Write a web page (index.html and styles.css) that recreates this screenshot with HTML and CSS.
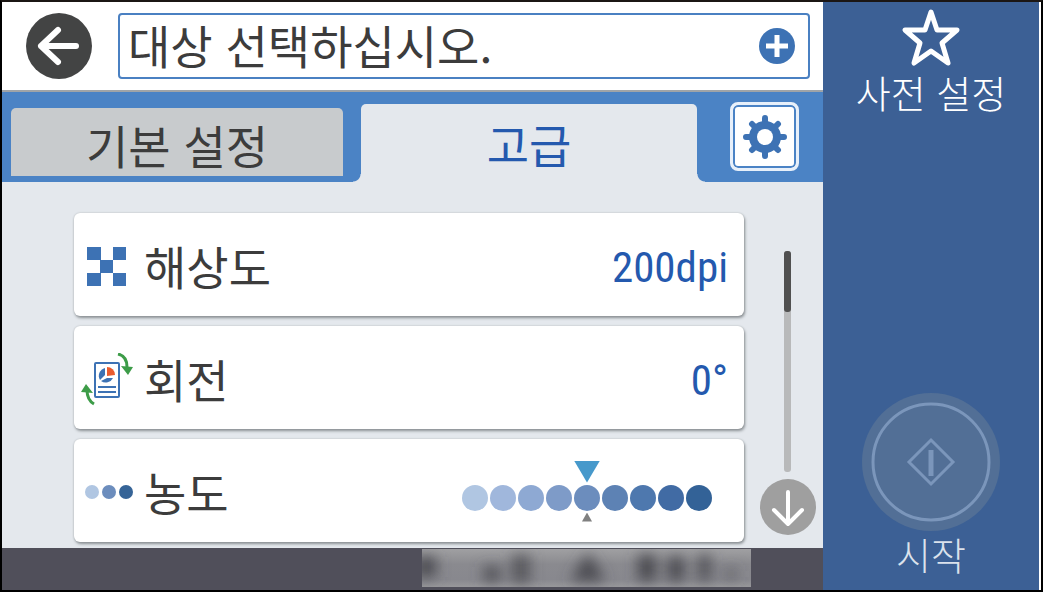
FILE: index.html
```html
<!DOCTYPE html>
<html lang="ko">

<head>
  <meta charset="UTF-8">
  <meta name="viewport" content="width=device-width, initial-scale=1.0">
  <title>스캔 설정</title>
  <link rel="stylesheet" href="styles.css">
</head>

<body>
  <div class="panel">
    <main>
      <header>
        <button class="back" type="button" aria-label="뒤로">
          <svg viewBox="0 0 66 66" width="66" height="66">
            <circle cx="33" cy="33" r="33" fill="#434444" />
            <path d="M43 33H15M32 17L15 33L32 49" fill="none" stroke="#fff" stroke-width="6" stroke-linecap="round" stroke-linejoin="round" />
            <path d="M40 33H50" stroke="#fff" stroke-width="6" stroke-linecap="round" />
          </svg>
        </button>
        <div class="destination">
          <input type="text" value="대상 선택하십시오." aria-label="대상" readonly>
          <button type="button" aria-label="대상 추가">
            <svg viewBox="0 0 36 36" width="36" height="36">
              <circle cx="18" cy="18" r="18" fill="#3d72b4" />
              <path d="M18 7V29M7 18H29" stroke="#fff" stroke-width="5" />
            </svg>
          </button>
        </div>
      </header>

      <nav class="tabs">
        <button class="tab" type="button">기본 설정</button>
        <button class="tab active" type="button">고급</button>
        <button class="gear" type="button" aria-label="설정">
          <svg viewBox="0 0 46 46" width="46" height="46">
            <g stroke="#3d72b4" stroke-width="6" stroke-linecap="round">
              <path d="M23 4V42M4 23H42M10 10L36 36M36 10L10 36" />
            </g>
            <circle cx="23" cy="23" r="16" fill="#3d72b4" />
            <circle cx="23" cy="23" r="8" fill="#fff" />
          </svg>
        </button>
      </nav>

      <section class="content">
        <div class="list">
          <button class="card" type="button">
            <svg class="icon" viewBox="0 0 54 54" width="54" height="54">
              <path d="M7 7h14v13h-14zM33 7h13v13h-13zM20 20h13v13h-13zM7 33h14v13h-14zM33 33h13v13h-13z" fill="#3d72b4" />
            </svg>
            <span class="name">해상도</span>
            <span class="value">200dpi</span>
          </button>

          <button class="card" type="button">
            <svg class="icon" viewBox="0 0 54 54" width="54" height="54">
              <rect x="15" y="10" width="24" height="34" rx="1" fill="#fff" stroke="#3d72b4" stroke-width="2" />
              <path d="M25 15A8 8 0 0 0 20 27L25 22Z" fill="#3d72b4" />
              <path d="M21 28A8 8 0 0 0 33 25H27Z" fill="#3d72b4" />
              <path d="M27 14A8 8 0 0 1 35 22L27 23Z" fill="#ea5b2d" />
              <path d="M18 34H36M18 39H36" stroke="#3d72b4" stroke-width="2" />
              <g fill="none" stroke="#3d9c48" stroke-width="3">
                <path d="M38 1Q47 3 47 14" />
                <path d="M14 51Q7 47 7 37" />
              </g>
              <path d="M41 13L53 14L48 22ZM1 39L6 31L13 40Z" fill="#3d9c48" />
            </svg>
            <span class="name">회전</span>
            <span class="value">0°</span>
          </button>

          <div class="card" role="group" aria-labelledby="density-name">
            <svg class="icon" viewBox="0 0 54 54" width="54" height="54">
              <circle cx="12" cy="26" r="7" fill="#b0c6e2" />
              <circle cx="29" cy="26" r="7" fill="#6c8dbd" />
              <circle cx="46" cy="26" r="7" fill="#366497" />
            </svg>
            <span class="name" id="density-name">농도</span>
            <div class="density">
              <input type="radio" name="density" aria-label="1" style="background: #b0c6e2">
              <input type="radio" name="density" aria-label="2" style="background: #a0b7dc">
              <input type="radio" name="density" aria-label="3" style="background: #8ea9d3">
              <input type="radio" name="density" aria-label="4" style="background: #7e9bc8">
              <input type="radio" name="density" aria-label="5" style="background: #6c8dbd" checked>
              <input type="radio" name="density" aria-label="6" style="background: #5d82b4">
              <input type="radio" name="density" aria-label="7" style="background: #4e78ae">
              <input type="radio" name="density" aria-label="8" style="background: #416ba4">
              <input type="radio" name="density" aria-label="9" style="background: #336297">
            </div>
          </div>
        </div>

        <div class="scroll">
          <div class="track">
            <div class="thumb"></div>
          </div>
          <button type="button" aria-label="아래로">
            <svg viewBox="0 0 57 57" width="57" height="57">
              <circle cx="29" cy="29" r="28" fill="#9f9f9f" />
              <path d="M29 14V46M15 32L29 46L43 32" fill="none" stroke="#fff" stroke-width="4" stroke-linecap="round" stroke-linejoin="round" />
            </svg>
          </button>
        </div>
      </section>

      <footer>
        <svg class="status" viewBox="0 0 329 38" width="329" height="38">
          <defs>
            <filter id="soft" x="-20%" y="-50%" width="140%" height="200%">
              <feGaussianBlur stdDeviation="7" />
            </filter>
            <linearGradient id="shade" x2="0" y2="1">
              <stop offset="0" stop-color="#a0a0a2" />
              <stop offset="0.4" stop-color="#8a8a8f" />
              <stop offset="0.8" stop-color="#88888e" />
              <stop offset="1" stop-color="#98989b" />
            </linearGradient>
          </defs>
          <rect width="329" height="38" fill="url(#shade)" />
          <g filter="url(#soft)" fill="#4a4a50">
            <rect x="-6" y="8" width="20" height="20" />
            <rect x="62" y="18" width="16" height="14" />
            <rect x="90" y="6" width="18" height="28" opacity="0.8" />
            <path d="M166 4L184 32H148Z" />
            <rect x="216" y="6" width="18" height="26" />
            <rect x="246" y="8" width="16" height="24" />
            <rect x="277" y="6" width="11" height="26" />
            <rect x="302" y="20" width="14" height="10" opacity="0.6" />
          </g>
        </svg>
      </footer>
    </main>

    <aside>
      <button class="preset" type="button">
        <svg viewBox="0 0 60 60" width="60" height="60">
          <path d="M30 5L36 23L56 23L41 36L47 56L30 44L13 56L19 36L4 23L24 23Z" fill="none" stroke="#fff" stroke-width="5" stroke-linejoin="round" />
        </svg>
        <span>사전 설정</span>
      </button>
      <button class="start" type="button">
        <svg viewBox="0 0 138 138" width="138" height="138">
          <circle cx="69" cy="69" r="69" fill="#526f96" />
          <circle cx="69" cy="69" r="58" fill="none" stroke="#7b96bb" stroke-width="3" />
          <path d="M69 47L91 69L69 91L47 69Z" fill="none" stroke="#7b96bb" stroke-width="3" />
          <path d="M69 57V83" stroke="#7b96bb" stroke-width="5" />
        </svg>
        <span>시작</span>
      </button>
    </aside>
  </div>
</body>

</html>
```
FILE: styles.css
```css
* {
  box-sizing: border-box;
}

body {
  margin: 0;
  background: #fff;
  color: #3c3c3c;
  font-family: "Noto Sans CJK KR", sans-serif;
}

button,
input {
  margin: 0;
  padding: 0;
  border: 0;
  background: none;
  color: inherit;
  font: inherit;
}

button {
  cursor: pointer;
}

svg {
  display: block;
}

.panel {
  display: flex;
  min-height: 100vh;
  border: 2px solid #000;
  border-top-color: #1b1614;
}

main {
  display: flex;
  flex: 1;
  flex-direction: column;
  min-width: 0;
}

header {
  display: flex;
  gap: 26px;
  padding: 11px 13px 11px 24px;
  border-bottom: 2px solid #a0a4a8;
}

.destination {
  display: flex;
  flex: 1;
  align-items: center;
  min-width: 0;
  padding: 0 13px 0 8px;
  border: 2px solid #4a80c2;
  border-radius: 4px;
}

.destination input {
  flex: 1;
  min-width: 0;
  height: 60px;
  padding-bottom: 4px;
  outline: 0;
  font-size: 46px;
}

.tabs {
  display: flex;
  align-items: flex-start;
  height: 90px;
  padding: 10px 24px 0 9px;
  background: #4b83c5;
}

.tab {
  flex: 332;
  height: 68px;
  margin-top: 6px;
  padding-top: 4px;
  border-radius: 5px 5px 0 0;
  background: #c8cbcd;
  font-size: 46px;
  line-height: 64px;
}

.tab.active {
  position: relative;
  flex: 336;
  height: 78px;
  margin: 2px 33px 0 18px;
  padding-top: 0;
  background: #e4e8ed;
  color: #2459ae;
  line-height: 78px;
}

/* curved feet of the open tab */
.tab.active::before,
.tab.active::after {
  content: "";
  position: absolute;
  bottom: 0;
  width: 8px;
  height: 8px;
}

.tab.active::before {
  right: 100%;
  background: radial-gradient(circle at 0 0, #4b83c5 7px, #e4e8ed 8px);
}

.tab.active::after {
  left: 100%;
  background: radial-gradient(circle at 100% 0, #4b83c5 7px, #e4e8ed 8px);
}

.gear {
  display: grid;
  place-items: center;
  width: 69px;
  height: 69px;
  border: 3px solid #e8f0fa;
  border-radius: 8px;
  background: #fff;
  box-shadow: inset 0 0 0 2px #4b83c5;
}

.content {
  display: flex;
  flex: 1;
  gap: 15px;
  padding: 31px 7px 6px 72px;
  background: #e4e8ed;
}

.list {
  display: flex;
  flex: 1;
  flex-direction: column;
  gap: 10px;
}

.card {
  display: flex;
  align-items: center;
  height: 103px;
  padding: 0 16px 0 6px;
  border-radius: 6px;
  background: #fff;
  box-shadow: 1px 2px 3px #8b9094, 0 0 2px #b5babe;
  font-size: 46px;
  line-height: 60px;
}

.icon {
  flex: none;
  margin: 4px 10px 0 0;
}

.value {
  margin: 4px 0 0 auto;
  color: #2459ae;
  font-family: "Roboto Condensed", "Noto Sans CJK KR", sans-serif;
  font-size: 43px;
}

.density {
  display: flex;
  gap: 2px;
  margin: 14px 16px 0 auto;
}

.density input {
  position: relative;
  width: 26px;
  height: 26px;
  border-radius: 50%;
  appearance: none;
}

.density input:checked::before,
.density input:checked::after {
  content: "";
  position: absolute;
  left: 0;
  width: 26px;
  height: 22px;
  bottom: 28px;
  background: #4799cb;
  clip-path: polygon(0 0, 100% 0, 50% 100%);
}

.density input:checked::after {
  left: 8px;
  top: 28px;
  width: 10px;
  height: 9px;
  background: #808080;
  clip-path: polygon(50% 0, 100% 100%, 0 100%);
}

.scroll {
  display: flex;
  flex-direction: column;
  align-items: center;
  gap: 6px;
  padding: 38px 0 7px;
}

.track {
  flex: 1;
  width: 7px;
  border-radius: 3px;
  background: #b8b9ba;
}

.thumb {
  height: 61px;
  border-radius: 3px;
  background: #505050;
}

footer {
  display: flex;
  justify-content: flex-end;
  height: 42px;
  padding: 1px 72px 0 0;
  background: #504f5a;
}

aside {
  display: flex;
  flex-direction: column;
  justify-content: space-between;
  width: 218px;
  padding: 5px 0 13px;
  border-right: 2px solid #fff;
  background: #3c6095;
  color: #fff;
  font-size: 38px;
  font-weight: 300;
  line-height: 46px;
}

.preset,
.start {
  display: flex;
  flex-direction: column;
  align-items: center;
}

.preset {
  gap: 2px;
}

.start {
  color: #dbe2ec;
}
```
